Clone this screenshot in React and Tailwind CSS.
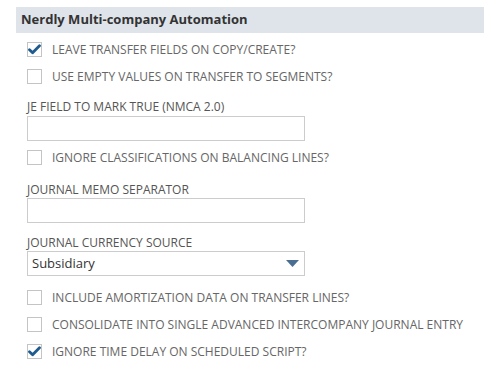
const font = { fontFamily: '"Open Sans", "Liberation Sans", sans-serif' };

function Check({ checked, label }) {
  return (
    <div className="flex h-[27px] items-center">
      <span className="flex h-[15px] w-[15px] shrink-0 items-center justify-center border border-[#c4c4c4] bg-white">
        {checked && (
          <svg width="13" height="11" viewBox="0 0 13 11">
            <path d="M1.5 5.8 L4.6 8.8 L11.5 1.8" fill="none" stroke="#1f5b8e" strokeWidth="2.8" strokeLinecap="round" strokeLinejoin="round" />
          </svg>
        )}
      </span>
      <span className="ml-[10px] text-[12px] uppercase text-[#666]">{label}</span>
    </div>
  );
}

function Field({ label, top, gap, children }) {
  return (
    <div className={top}>
      <div className="text-[12px] leading-[16px] uppercase text-[#555]">{label}</div>
      <div className={gap}>{children}</div>
    </div>
  );
}

export default function App() {
  return (
    <div className="w-[484px] h-[369px] bg-white pt-[7px]" style={font}>
      <div className="ml-4 flex h-[26px] items-center bg-[#dfe4eb] px-[5px] text-[13px] font-bold text-[#333]">
        Nerdly Multi-company Automation
      </div>
      <div className="pl-[27px] pt-[3px]">
        <Check checked label="Leave transfer fields on copy/create?" />
        <Check label="Use empty values on transfer to segments?" />
        <Field label="JE field to mark true (NMCA 2.0)" top="mt-[9px]" gap="mt-[1px]">
          <div className="h-[25px] w-[278px] border border-[#ccc] bg-white" />
        </Field>
        <div className="mt-[3px]">
          <Check label="Ignore classifications on balancing lines?" />
        </div>
        <Field label="Journal memo separator" top="mt-[11px]" gap="mt-0">
          <div className="h-[25px] w-[278px] border border-[#ccc] bg-white" />
        </Field>
        <Field label="Journal currency source" top="mt-[12px]" gap="mt-0">
          <div className="flex h-[25px] w-[278px] items-center justify-between border border-[#ccc] bg-white pl-[4px] pr-[5px] text-[13px] text-[#333]">
            <span>Subsidiary</span>
            <svg width="13" height="7" viewBox="0 0 13 7">
              <path d="M0 0 H13 L6.5 7 Z" fill="#4a6d92" />
            </svg>
          </div>
        </Field>
        <div className="mt-[8px]">
          <Check label="Include amortization data on transfer lines?" />
          <Check label="Consolidate into single advanced intercompany journal entry" />
          <Check checked label="Ignore time delay on scheduled script?" />
        </div>
      </div>
    </div>
  );
}
